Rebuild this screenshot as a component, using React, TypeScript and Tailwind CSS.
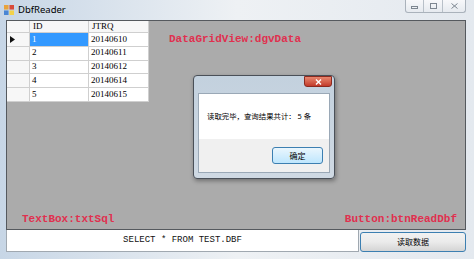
import React from "react";

const rows = [
  { id: "1", d: "20140610" },
  { id: "2", d: "20140611" },
  { id: "3", d: "20140612" },
  { id: "4", d: "20140614" },
  { id: "5", d: "20140615" },
];

const mono = { fontFamily: '"Liberation Mono", "DejaVu Sans Mono", monospace' };
const cjk = { fontFamily: '"Noto Sans", "Noto Sans CJK SC", sans-serif' };

function AppIcon() {
  return (
    <svg width="10" height="10" viewBox="0 0 11 11">
      <rect x="0" y="0" width="5" height="5" fill="#e8a33c" />
      <rect x="6" y="0" width="5" height="5" fill="#d94a3a" />
      <rect x="0" y="6" width="5" height="5" fill="#4a86d4" />
      <rect x="6" y="6" width="5" height="5" fill="#f3d24a" />
    </svg>
  );
}

function DataGrid() {
  return (
    <div className="flex flex-col bg-white text-[9px] text-black" style={{ fontFamily: '"Liberation Serif", "DejaVu Serif", serif' }}>
      <div className="flex h-[12px] bg-[#f7f7f7]">
        <div className="w-[23px] border-r border-b border-[#cfcfcf]" />
        <div className="flex w-[59px] items-center border-r border-b border-[#cfcfcf] pl-[3px]">ID</div>
        <div className="flex w-[60px] items-center border-r border-b border-[#cfcfcf] pl-[3px]">JTRQ</div>
      </div>
      {rows.map((r, i) => (
        <div key={r.id} className="flex h-[13.8px]">
          <div className="flex w-[23px] items-center border-r border-b border-[#cfcfcf] bg-[#f7f7f7] pl-[3px]">
            {i === 0 && (
              <svg width="5" height="7" viewBox="0 0 5 7">
                <path d="M0 0 L5 3.5 L0 7 Z" fill="#111" />
              </svg>
            )}
          </div>
          <div
            className={
              "flex w-[59px] items-center border-r border-b border-[#cfcfcf] pl-[2px] " +
              (i === 0 ? "bg-[#3399ff] text-white" : "")
            }
          >
            {r.id}
          </div>
          <div className="flex w-[60px] items-center border-r border-b border-[#cfcfcf] pl-[2px]">{r.d}</div>
        </div>
      ))}
    </div>
  );
}

function MessageBox() {
  return (
    <div className="absolute left-[193px] top-[75px] flex w-[142px] flex-col rounded-[4px] border border-[#4a5058] bg-gradient-to-b from-[#c3d1de] to-[#cfd9e3] shadow-[1px_2px_4px_rgba(0,0,0,0.35)]">
      <div className="relative h-[17px]">
        <div className="absolute right-[2px] top-0 flex h-[11px] w-[28px] items-center justify-center rounded-b-[3px] border border-[#8a2a20] bg-gradient-to-b from-[#e8866e] to-[#c2392a]">
          <svg width="7" height="6" viewBox="0 0 7 6">
            <path d="M1 0.5 L6 5.5 M6 0.5 L1 5.5" stroke="#fff" strokeWidth="1.4" />
          </svg>
        </div>
      </div>
      <div className="mx-[4px] mb-[5px] flex flex-col border border-[#9aa8b6]">
        <div className="flex h-[45px] items-center bg-white pl-[8px] text-[7.4px] text-black" style={cjk}>
          读取完毕，查询结果共计： 5 条
        </div>
        <div className="flex h-[33px] items-start justify-end bg-[#f0f0f0] pr-[6px] pt-[8px]">
          <div
            className="flex h-[17px] w-[51px] items-center justify-center rounded-[3px] border border-[#3c7fb1] bg-gradient-to-b from-[#eaf6fd] to-[#bee6fd] text-[8px] text-black"
            style={cjk}
          >
            确定
          </div>
        </div>
      </div>
    </div>
  );
}

export default function App() {
  return (
    <div className="relative flex h-[259px] w-[474px] flex-col overflow-hidden bg-gradient-to-r from-[#c7d6e6] via-[#eef1f4] to-[#e4e9ef]">
      {/* title bar */}
      <div className="flex h-[20px] items-start">
        <div className="flex items-center gap-[4px] pl-[4px] pt-[4px]">
          <AppIcon />
          <span className="text-[9.5px] leading-[12px] text-black" style={{ fontFamily: '"Noto Sans", "Open Sans", sans-serif' }}>
            DbfReader
          </span>
        </div>
        <div className="ml-auto mr-[8px] flex h-[13px] overflow-hidden rounded-b-[3px] border border-t-0 border-[#aab2bb] bg-gradient-to-b from-[#f7f8fa] to-[#e6eaef]">
          <div className="flex w-[18px] items-center justify-center border-r border-[#b8c0c8]">
            <div className="mt-[3px] h-[3px] w-[7px] border border-[#7d8690]" />
          </div>
          <div className="flex w-[19px] items-center justify-center border-r border-[#b8c0c8]">
            <div className="h-[6px] w-[7px] border border-[#7d8690]" />
          </div>
          <div className="flex w-[22px] items-center justify-center">
            <svg width="7" height="6" viewBox="0 0 7 6">
              <path d="M0.5 0.5 L6.5 5.5 M6.5 0.5 L0.5 5.5" stroke="#7d8690" strokeWidth="1" />
            </svg>
          </div>
        </div>
      </div>

      {/* client area */}
      <div className="flex flex-1 flex-col pl-[6px] pr-[8px]">
        <div className="flex flex-1 flex-col border border-[#55595e] bg-[#ababab]">
          <div className="flex items-start">
            <DataGrid />
            <div className="ml-[20px] mt-[12px] text-[11px] font-bold leading-[12px] text-[#e0304f]" style={mono}>
              DataGridView:dgvData
            </div>
          </div>
          <div className="mt-auto flex items-end justify-between pb-[4px] pl-[15px] pr-[8px] text-[11px] font-bold leading-[12px] text-[#e0304f]" style={mono}>
            <span>TextBox:txtSql</span>
            <span>Button:btnReadDbf</span>
          </div>
        </div>
        <div className="flex h-[22px] items-stretch">
          <div className="flex w-[353px] items-center justify-center border-x border-b border-[#a0a8b0] bg-white text-[9px] text-[#111]" style={mono}>
            SELECT * FROM TEST.DBF
          </div>
          <div className="flex flex-1 items-center pl-[1px] pt-[1px]">
            <div
              className="flex h-[20px] w-full items-center justify-center rounded-[3px] border border-[#3c7fb1] bg-gradient-to-b from-[#f2f2f2] via-[#ebebeb] to-[#d4d4d4] text-[8px] text-black"
              style={cjk}
            >
              读取数据
            </div>
          </div>
        </div>
        <div className="h-[7px]" />
      </div>

      <MessageBox />
    </div>
  );
}
